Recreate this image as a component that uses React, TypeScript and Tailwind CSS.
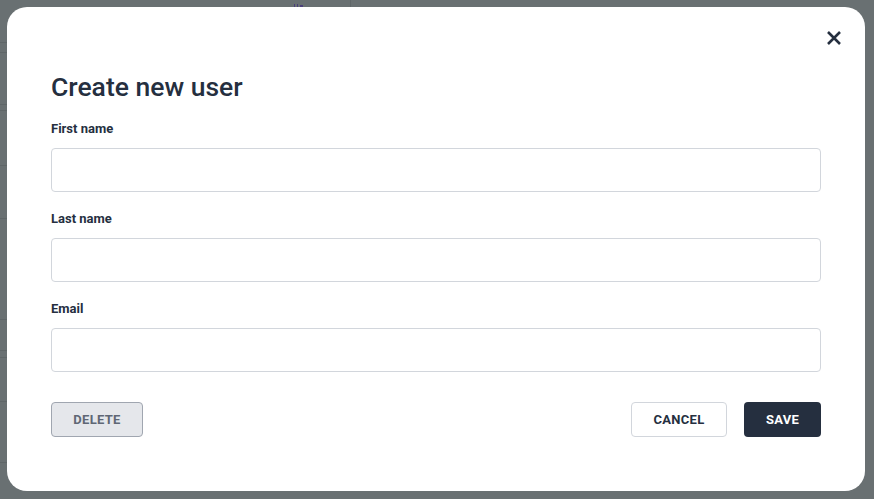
import React from "react";

function Field({ label, first }: { label: string; first?: boolean }) {
  return (
    <div className={first ? "" : "mt-[17px]"}>
      <div className="text-[13px] leading-[20px] font-bold text-[#252f3f] mb-[9px]">{label}</div>
      <input
        className="block w-full h-[44px] rounded-[4px] border border-[#d2d6dc] bg-white px-3 text-[14px] outline-none"
        type="text"
      />
    </div>
  );
}

const sideLines = [42, 52, 104, 110, 165, 218, 319, 350, 357, 401, 462];

export default function App() {
  return (
    <div
      className="relative w-[874px] h-[499px] bg-[#697072] overflow-hidden pt-[7px] pl-[7px] pr-[9px] pb-[8px]"
      style={{ fontFamily: "Roboto, 'Noto Sans', sans-serif" }}
    >
      {/* faint page behind the backdrop */}
      <div className="absolute inset-0">
        {sideLines.map((y) => (
          <div key={y} className="absolute left-0 w-[8px] h-px bg-[#5f6668]" style={{ top: y }} />
        ))}
        <div className="absolute left-[350px] top-0 w-px h-[8px] bg-[#5f6668]" />
        <div className="absolute left-[294px] top-[4px] flex gap-[2px]">
          <span className="w-px h-[3px] bg-[#4b3f7a]" />
          <span className="w-px h-[3px] bg-[#4b3f7a]" />
          <span className="w-[3px] h-[2px] mt-px bg-[#4b3f7a]" />
        </div>
      </div>

      <div className="relative w-full h-full bg-white rounded-[20px] pt-[64px] px-[44px]">
        <button className="absolute top-[22px] right-[22px] w-[18px] h-[18px] flex items-center justify-center text-[#252f3f]">
          <svg width="16" height="16" viewBox="0 0 16 16" fill="none">
            <path d="M2 2L14 14M14 2L2 14" stroke="currentColor" strokeWidth="2.6" strokeLinecap="butt" />
          </svg>
        </button>

        <h1 className="text-[26.5px] leading-[32px] font-medium text-[#252f3f] mb-[16px]">Create new user</h1>

        <Field label="First name" first />
        <Field label="Last name" />
        <Field label="Email" />

        <div className="flex items-center justify-between mt-[30px]">
          <button className="h-[35px] w-[92px] rounded-[4px] border border-[#a0a6b0] bg-[#e5e7eb] text-[13px] font-bold text-[#5f6775] tracking-[0.3px]">
            DELETE
          </button>
          <div className="flex gap-[17px]">
            <button className="h-[35px] w-[96px] rounded-[4px] border border-[#d2d6dc] bg-white text-[13px] font-bold text-[#252f3f] tracking-[0.3px]">
              CANCEL
            </button>
            <button className="h-[35px] w-[77px] rounded-[4px] bg-[#252f3f] text-[13px] font-bold text-white tracking-[0.3px]">
              SAVE
            </button>
          </div>
        </div>
      </div>
    </div>
  );
}
